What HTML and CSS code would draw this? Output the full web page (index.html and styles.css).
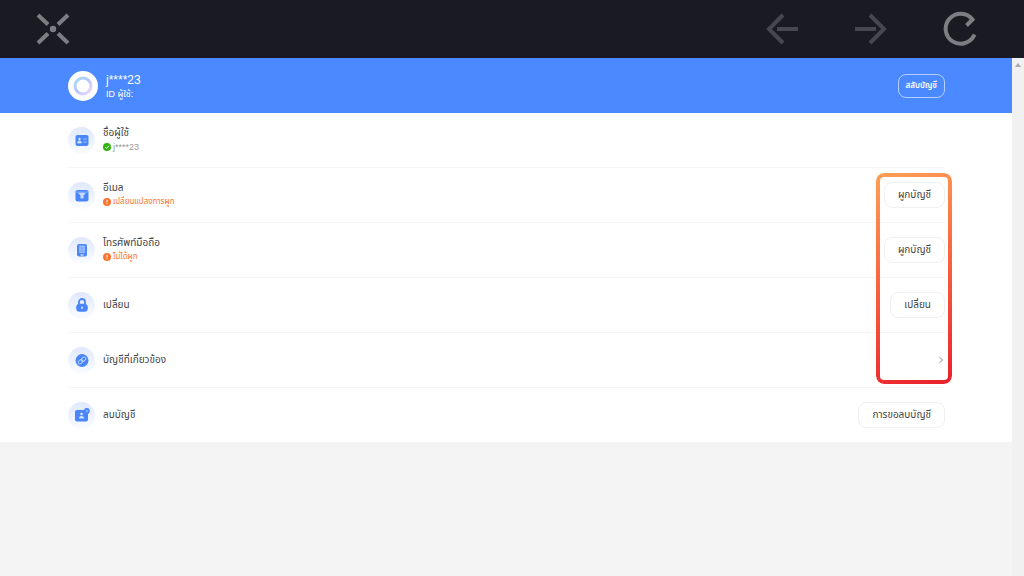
FILE: index.html
```html
<!DOCTYPE html>
<html lang="th">
<head>
<meta charset="utf-8">
<meta name="viewport" content="width=device-width, initial-scale=1">
<title>บัญชี</title>
<link rel="stylesheet" href="styles.css">
</head>
<body>
<nav class="toolbar">
  <button class="tool" aria-label="ปิด">
    <svg width="34" height="32" viewBox="0 0 34 32" fill="none" stroke="#7d7d82" stroke-width="4"><path d="M2 2l10 9.500M32 2L22 11.500M2 30l10-9.500M32 30L22 20.500"/><circle cx="17" cy="16" r="3.200" fill="#7d7d82" stroke="none"/></svg>
  </button>
  <div class="history">
    <button class="tool" aria-label="ย้อนกลับ">
      <svg width="34" height="32" viewBox="0 0 34 32" fill="none" stroke="#47474d" stroke-width="4"><path d="M18 2L4 16l14 14M12 16h21"/></svg>
    </button>
    <button class="tool" aria-label="ไปข้างหน้า">
      <svg width="34" height="32" viewBox="0 0 34 32" fill="none" stroke="#47474d" stroke-width="4"><path d="M16 2l14 14-14 14M1 16h21"/></svg>
    </button>
    <button class="tool" aria-label="โหลดใหม่">
      <svg width="34" height="36" viewBox="0 0 34 36" fill="none" stroke="#7d7d82" stroke-width="4"><path d="M31.500 23.500A15 15 0 1 1 29.500 8.500L23.500 14.500"/></svg>
    </button>
  </div>
</nav>
<div class="viewport">
  <main class="page">
    <header class="profile">
      <svg class="avatar" width="30" height="30" viewBox="0 0 30 30">
        <defs><linearGradient id="ring" x1="0" y1="0" x2="1" y2="1"><stop offset="0" stop-color="#a5dcf5"/><stop offset=".5" stop-color="#b9c6fa"/><stop offset="1" stop-color="#f3dcf9"/></linearGradient></defs>
        <circle cx="15" cy="15" r="15" fill="#fff"/><circle cx="15" cy="15" r="8" fill="none" stroke="url(#ring)" stroke-width="3"/>
      </svg>
      <div class="identity">
        <h1 class="name">j****23</h1>
        <p class="uid">ID ผู้ใช้:</p>
      </div>
      <button class="switch">สลับบัญชี</button>
    </header>
    <div class="settings">
      <ul class="list">
        <li class="row">
          <span class="badge"><svg width="14" height="14" viewBox="0 0 14 14"><rect x="0.500" y="2" width="13" height="11" rx="2" fill="#4a86f7"/><circle cx="4.500" cy="6" r="1.200" fill="#d7e5ff"/><path d="M2.500 10a2 2 0 0 1 4 0zM8.500 6h3M8.500 9h3" fill="#d7e5ff" stroke="#d7e5ff" stroke-width=".7"/></svg></span>
          <div class="info"><h2 class="label">ชื่อผู้ใช้</h2>
            <p class="note"><svg width="8" height="8" viewBox="0 0 8 8"><circle cx="4" cy="4" r="4" fill="#2fb50f"/><path d="M2 4l1.500 1.500L6 2.800" fill="none" stroke="#fff"/></svg>j****23</p></div>
        </li>
        <li class="row">
          <span class="badge"><svg width="14" height="14" viewBox="0 0 14 14"><rect x="0.500" y="2" width="13" height="11.500" rx="2" fill="#4a86f7"/><path d="M2.800 4.500h8.400L8.500 7.500v3h-3v-3z" fill="#c9dcff"/><path d="M0.500 4h13" stroke="#7eaaff"/></svg></span>
          <div class="info"><h2 class="label">อีเมล</h2>
            <p class="note warn"><svg width="8" height="8" viewBox="0 0 8 8"><circle cx="4" cy="4" r="4" fill="#fb742c"/><path d="M4 1.800v2.700M4 5.300v1" stroke="#fff"/></svg>เปลี่ยนแปลงการผูก</p></div>
          <button class="action">ผูกบัญชี</button>
        </li>
        <li class="row">
          <span class="badge"><svg width="14" height="14" viewBox="0 0 14 14"><rect x="2" y="1" width="10" height="12.500" rx="2" fill="#4a86f7"/><rect x="4" y="2.500" width="6" height="7.500" rx="1" fill="#9dbfff"/><path d="M4 5h6M4 7.500h6M7 2.500v7.500" stroke="#6e9fff" stroke-width=".7"/><path d="M5.500 12h3" stroke="#fff"/></svg></span>
          <div class="info"><h2 class="label">โทรศัพท์มือถือ</h2>
            <p class="note warn"><svg width="8" height="8" viewBox="0 0 8 8"><circle cx="4" cy="4" r="4" fill="#fb742c"/><path d="M4 1.800v2.700M4 5.300v1" stroke="#fff"/></svg>ไม่ได้ผูก</p></div>
          <button class="action">ผูกบัญชี</button>
        </li>
        <li class="row">
          <span class="badge"><svg width="14" height="14" viewBox="0 0 14 14"><path d="M4 7V4a3 3 0 0 1 6 0V7" fill="none" stroke="#4a86f7" stroke-width="1.800"/><rect x="1.200" y="5.800" width="11.600" height="7.900" rx="3.500" fill="#4a86f7"/><path d="M7 8.500v2.500" stroke="#d7e5ff" stroke-width="1.500"/></svg></span>
          <div class="info"><h2 class="label">เปลี่ยน</h2></div>
          <button class="action">เปลี่ยน</button>
        </li>
        <li class="row">
          <span class="badge"><svg width="14" height="14" viewBox="0 0 14 14"><circle cx="7" cy="7.500" r="6.500" fill="#4a86f7"/><g transform="rotate(-38 7 7.500)" fill="none" stroke="#c9dcff" stroke-width=".9"><rect x="2.500" y="5.800" width="5.300" height="3.400" rx="1.700"/><rect x="6.200" y="5.800" width="5.300" height="3.400" rx="1.700"/></g></svg></span>
          <div class="info"><h2 class="label">บัญชีที่เกี่ยวข้อง</h2></div>
          <a class="more" href="#" aria-label="บัญชีที่เกี่ยวข้อง"><svg width="8" height="8" viewBox="0 0 8 8" fill="none" stroke="#888"><path d="M2.500 1l3 3-3 3"/></svg></a>
        </li>
        <li class="row">
          <span class="badge"><svg width="16" height="14" viewBox="0 0 16 14"><rect x="1" y="2" width="13" height="11.500" rx="2" fill="#4a86f7"/><circle cx="7.500" cy="6" r="1.300" fill="#d7e5ff"/><path d="M5 10.500a2.500 2.500 0 0 1 5 0z" fill="#d7e5ff"/><circle cx="12.800" cy="3" r="3" fill="#4a86f7"/><path d="M11.900 2.100l1.800 1.800M13.700 2.100l-1.800 1.800" stroke="#b9d1ff" stroke-width=".7"/></svg></span>
          <div class="info"><h2 class="label">ลบบัญชี</h2></div>
          <button class="action">การขอลบบัญชี</button>
        </li>
      </ul>
      <div class="highlight"></div>
    </div>
  </main>
  <div class="scrollbar"><svg width="6" height="4" viewBox="0 0 6 4"><path d="M3 0l3 4H0z" fill="#aaa"/></svg></div>
</div>
</body>
</html>
```
FILE: styles.css
```css
* { box-sizing: border-box; }

body {
  margin: 0;
  min-height: 100vh;
  display: flex;
  flex-direction: column;
  background: #f4f4f4;
  color: #444;
  font-family: "Liberation Sans", "Noto Sans Thai", sans-serif;
}

h1, h2, p, ul { margin: 0; padding: 0; font-weight: 400; }
ul { list-style: none; }
svg { display: block; }
button { font-family: inherit; cursor: pointer; }

.toolbar {
  display: flex;
  align-items: center;
  justify-content: space-between;
  height: 58px;
  padding: 0 47px 0 36px;
  background: #1a1a22;
}
.history { display: flex; align-items: center; gap: 55px; }
.tool { padding: 0; border: 0; background: none; }

.viewport { flex: 1; display: flex; }
.page { flex: 1; }

.profile {
  display: flex;
  align-items: center;
  gap: 8px;
  height: 55px;
  padding: 0 67px 0 68px;
  background: #4a89ff;
  color: #fff;
}
.identity { flex: 1; }
.name { font-size: 12px; line-height: 16px; }
.uid { font-size: 9px; line-height: 12px; }
.switch {
  height: 24px;
  padding: 0 7px;
  border: 1px solid #b5d0ff;
  border-radius: 8px;
  background: none;
  color: #fff;
  font-size: 8px;
  font-weight: 600;
}

.settings { position: relative; background: #fff; }
.list { padding: 0 67px 0 68px; }
.row {
  display: flex;
  align-items: center;
  gap: 8px;
  height: 55px;
  border-bottom: 1px solid #f5f5f5;
}
.row:last-child { height: 54px; border-bottom: 0; }

.badge {
  display: grid;
  place-items: center;
  width: 27px;
  height: 27px;
  border-radius: 50%;
  background: linear-gradient(#e0e8fd, #fafcff);
}
.info { flex: 1; }
.label { font-size: 10px; line-height: 14px; }
.note {
  display: flex;
  align-items: center;
  gap: 2px;
  color: #999;
  font-size: 9px;
  line-height: 14px;
}
.warn { color: #fb742c; font-size: 8px; }

.action {
  height: 26px;
  padding: 0 13px;
  border: 1px solid #f0f0f0;
  border-radius: 8px;
  background: #fff;
  color: #444;
  font-size: 10px;
}

.highlight {
  position: absolute;
  top: 60px;
  right: 60px;
  bottom: 58px;
  width: 76px;
  padding: 4px;
  border-radius: 8px;
  background: linear-gradient(160deg, #ff9f55, #f8603f 50%, #e8202c);
  mask: linear-gradient(#000 0 0) content-box exclude, linear-gradient(#000 0 0);
  pointer-events: none;
}

.scrollbar {
  display: flex;
  justify-content: center;
  width: 12px;
  padding-top: 5px;
  background: #f1f1f1;
}
```
